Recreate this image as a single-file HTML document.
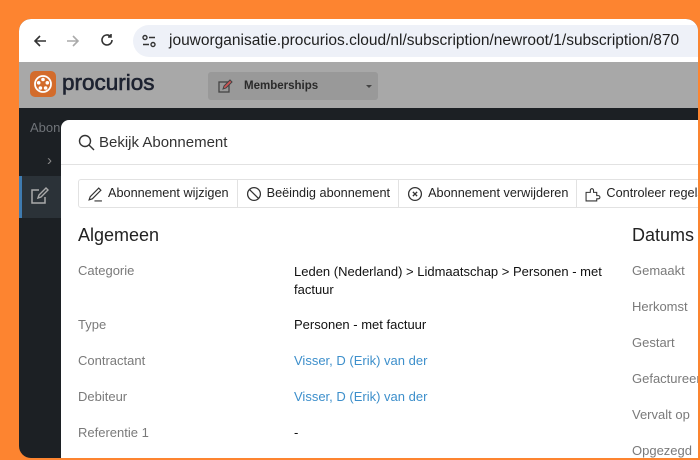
<!DOCTYPE html>
<html><head><meta charset="utf-8"><style>
*{margin:0;padding:0;box-sizing:border-box}
body{width:700px;height:460px;background:#fd8430;position:relative;overflow:hidden;font-family:"Liberation Sans",Arial,sans-serif}
.win{position:absolute;left:19px;top:19px;width:679px;height:439px;background:#1c2024;border-radius:12px 12px 0 12px;overflow:hidden}
.tb{position:absolute;left:0;top:0;width:100%;height:43px;background:#fff}
.url{position:absolute;left:114px;top:6px;width:580px;height:32px;border-radius:16px;background:#eef1f8;font-size:15.5px;color:#1f1f1f;line-height:32px;padding-left:36px;white-space:nowrap}
.hd{position:absolute;left:0;top:43px;width:100%;height:46px;background:#a8a8a8}
.abs{position:absolute}
.modal{position:absolute;left:42px;top:101px;width:640px;height:340px;background:#fff;border-radius:8px 0 0 0}
.lbl{position:absolute;left:17px;font-size:13px;color:#7a7a7a}
.val{position:absolute;left:233px;font-size:13px;color:#111}
.lnk{color:#3d8fcb}
.dl{position:absolute;left:571px;font-size:13px;color:#7a7a7a}
.btns{position:absolute;left:17px;top:59px;width:640px;height:29px;border:1px solid #e2e2e2;border-radius:3px;display:flex}
.btns div{height:27px;border-right:1px solid #e2e2e2;font-size:12.7px;color:#222;line-height:27px;padding-left:8px;padding-right:8px;display:flex;align-items:center;gap:5px;white-space:nowrap}
</style></head><body>
<div class="win">
 <div class="tb">
  <svg class="abs" style="left:13px;top:14px" width="16" height="16" viewBox="0 0 16 16"><path d="M14 8H3M8 3L3 8l5 5" stroke="#333" stroke-width="1.6" fill="none"/></svg>
  <svg class="abs" style="left:46px;top:14px" width="16" height="16" viewBox="0 0 16 16"><path d="M2 8h11M8 3l5 5-5 5" stroke="#aaa" stroke-width="1.6" fill="none"/></svg>
  <svg class="abs" style="left:80px;top:13px" width="16" height="16" viewBox="0 0 16 16"><path d="M13 8a5 5 0 1 1-1.5-3.6M12 2v3h-3" stroke="#333" stroke-width="1.6" fill="none"/></svg>
  <div class="url">jouworganisatie.procurios.cloud/nl/subscription/newroot/1/subscription/870
   <svg class="abs" style="left:8px;top:8px" width="16" height="16" viewBox="0 0 16 16"><circle cx="4" cy="4.5" r="2" stroke="#333" fill="none" stroke-width="1.4"/><path d="M8 4.5h6M2 11.5h6" stroke="#333" stroke-width="1.4"/><circle cx="12" cy="11.5" r="2" stroke="#333" fill="none" stroke-width="1.4"/></svg>
  </div>
 </div>
 <div class="hd">
  <div class="abs" style="left:11px;top:9px;width:26px;height:26px;border-radius:5px;background:#d36c2c"></div>
  <svg class="abs" style="left:14px;top:12px" width="20" height="20" viewBox="0 0 20 20"><circle cx="10" cy="10" r="8" fill="none" stroke="#fff" stroke-width="1.8"/><circle cx="10" cy="5.5" r="1.8" fill="#fff"/><circle cx="5.7" cy="8.8" r="1.8" fill="#fff"/><circle cx="14.3" cy="8.8" r="1.8" fill="#fff"/><circle cx="7.4" cy="14" r="1.8" fill="#fff"/><circle cx="12.6" cy="14" r="1.8" fill="#fff"/></svg>
  <div class="abs" style="left:43px;top:8px;font-size:22.5px;color:#1d2230;-webkit-text-stroke:0.6px #1d2230">procurios</div>
  <div class="abs" style="left:189px;top:10px;width:170px;height:28px;background:#999;border-radius:3px"></div>
  <svg class="abs" style="left:199px;top:17px" width="15" height="15" viewBox="0 0 15 15"><rect x="1" y="3" width="10" height="10" fill="none" stroke="#444" stroke-width="1.3"/><path d="M5 10l1-3 6-6 2 2-6 6z" fill="#c55" stroke="#444" stroke-width="1"/></svg>
  <div class="abs" style="left:225px;top:18px;font-size:11.5px;font-weight:bold;color:#2a2a2a">Memberships</div>
  <div class="abs" style="left:347px;top:23px;border:3px solid transparent;border-top:3px solid #444"></div>
 </div>
 <div class="abs" style="left:11px;top:101px;font-size:13px;color:#6f7378">Abon</div>
 <div class="abs" style="left:28px;top:133px;font-size:15px;color:#888">&#8250;</div>
 <div class="abs" style="left:0;top:157px;width:42px;height:42px;background:#2b3238;border-left:3px solid #3f7bb0"></div>
 <svg class="abs" style="left:11px;top:167px" width="20" height="20" viewBox="0 0 20 20"><path d="M15 11v6H2V4h7" fill="none" stroke="#aaa" stroke-width="1.5"/><path d="M8 12l1-3 7-7 2 2-7 7z" fill="none" stroke="#aaa" stroke-width="1.4"/></svg>
 <div class="modal">
  <svg class="abs" style="left:17px;top:14px" width="17" height="17" viewBox="0 0 17 17"><circle cx="7" cy="7" r="5.5" fill="none" stroke="#333" stroke-width="1.4"/><path d="M11 11l5 5" stroke="#333" stroke-width="1.4"/></svg>
  <div class="abs" style="left:38px;top:14px;font-size:15px;color:#333">Bekijk Abonnement</div>
  <div class="abs" style="left:0;top:44px;width:100%;height:1px;background:#e2e2e2"></div>
  <div class="btns">
   <div><svg width="16" height="16" viewBox="0 0 15 15"><path d="M2 13l1-3 8-8 2 2-8 8zM7 14h7" fill="none" stroke="#333" stroke-width="1.1"/></svg>Abonnement wijzigen</div>
   <div><svg width="16" height="16" viewBox="0 0 15 15"><circle cx="7.5" cy="7.5" r="6" fill="none" stroke="#333" stroke-width="1.2"/><path d="M3.3 3.3l8.4 8.4" stroke="#333" stroke-width="1.2"/></svg>Beëindig abonnement</div>
   <div><svg width="16" height="16" viewBox="0 0 15 15"><circle cx="7.5" cy="7.5" r="6" fill="none" stroke="#333" stroke-width="1.2"/><path d="M5.5 5.5l4 4M9.5 5.5l-4 4" stroke="#333" stroke-width="1.2"/></svg>Abonnement verwijderen</div>
   <div style="border-right:none"><svg width="16" height="16" viewBox="0 0 15 15"><path d="M1 6h4V4a1.5 1.5 0 0 1 3 0v2h3v3h1.5a1.3 1.3 0 0 1 0 3H11v2H1z" fill="none" stroke="#333" stroke-width="1"/></svg>Controleer regels</div>
  </div>
  <div class="abs" style="left:17px;top:105px;font-size:18px;color:#222">Algemeen</div>
  <div class="abs" style="left:571px;top:105px;font-size:18px;color:#222">Datums</div>
  <div class="lbl" style="top:143px">Categorie</div>
  <div class="val" style="top:143px;line-height:18px">Leden (Nederland) &gt; Lidmaatschap &gt; Personen - met<br>factuur</div>
  <div class="lbl" style="top:197px">Type</div><div class="val" style="top:197px">Personen - met factuur</div>
  <div class="lbl" style="top:233px">Contractant</div><div class="val lnk" style="top:233px">Visser, D (Erik) van der</div>
  <div class="lbl" style="top:269px">Debiteur</div><div class="val lnk" style="top:269px">Visser, D (Erik) van der</div>
  <div class="lbl" style="top:305px">Referentie 1</div><div class="val" style="top:305px">-</div>
  <div class="dl" style="top:143px">Gemaakt</div>
  <div class="dl" style="top:179px">Herkomst</div>
  <div class="dl" style="top:215px">Gestart</div>
  <div class="dl" style="top:251px">Gefactureerd</div>
  <div class="dl" style="top:287px">Vervalt op</div>
  <div class="dl" style="top:323px">Opgezegd</div>
 </div>
</div>
</body></html>
